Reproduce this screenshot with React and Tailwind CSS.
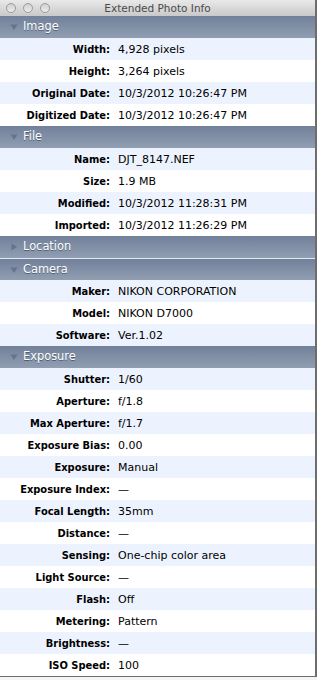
const sections = [
  {
    title: 'Image',
    open: true,
    rows: [
      ['Width:', '4,928 pixels'],
      ['Height:', '3,264 pixels'],
      ['Original Date:', '10/3/2012 10:26:47 PM'],
      ['Digitized Date:', '10/3/2012 10:26:47 PM'],
    ],
  },
  {
    title: 'File',
    open: true,
    rows: [
      ['Name:', 'DJT_8147.NEF'],
      ['Size:', '1.9 MB'],
      ['Modified:', '10/3/2012 11:28:31 PM'],
      ['Imported:', '10/3/2012 11:26:29 PM'],
    ],
  },
  { title: 'Location', open: false, rows: [] },
  {
    title: 'Camera',
    open: true,
    rows: [
      ['Maker:', 'NIKON CORPORATION'],
      ['Model:', 'NIKON D7000'],
      ['Software:', 'Ver.1.02'],
    ],
  },
  {
    title: 'Exposure',
    open: true,
    rows: [
      ['Shutter:', '1/60'],
      ['Aperture:', 'f/1.8'],
      ['Max Aperture:', 'f/1.7'],
      ['Exposure Bias:', '0.00'],
      ['Exposure:', 'Manual'],
      ['Exposure Index:', '\u2014'],
      ['Focal Length:', '35mm'],
      ['Distance:', '\u2014'],
      ['Sensing:', 'One-chip color area'],
      ['Light Source:', '\u2014'],
      ['Flash:', 'Off'],
      ['Metering:', 'Pattern'],
      ['Brightness:', '\u2014'],
      ['ISO Speed:', '100'],
    ],
  },
]

const TrafficLight = () => (
  <span className="block w-[10px] h-[10px] rounded-full border border-[#9c9c9c] bg-gradient-to-b from-[#cfcfcf] to-[#ededed]" />
)

const Disclosure = ({ open }) => (
  <svg width="8" height="8" viewBox="0 0 8 8" className="shrink-0">
    {open ? (
      <path d="M0.5 1.5 L7.5 1.5 L4 7 Z" fill="#66738a" />
    ) : (
      <path d="M1.5 0.5 L7 4 L1.5 7.5 Z" fill="#66738a" />
    )}
  </svg>
)

const Header = ({ title, open, line }) => (
  <div
    className={`h-[22px] flex items-center pl-[10px] gap-[5px] bg-gradient-to-b from-[#71819a] to-[#919eb2] ${line ? 'border-t border-[#e4e9f1]' : ''}`}
  >
    <Disclosure open={open} />
    <span
      className="text-white text-[11.4px] leading-none"
      style={{ textShadow: '0 1px 0 rgba(40,50,70,0.55)' }}
    >
      {title}
    </span>
  </div>
)

const Row = ({ label, value, shaded }) => (
  <div className={`h-[22px] flex items-center ${shaded ? 'bg-[#edf3fe]' : 'bg-white'}`}>
    <span className="w-[110px] text-right font-bold text-[11px] text-black leading-none" style={{ fontFamily: '"DejaVu Sans Condensed", "DejaVu Sans", sans-serif', fontStretch: 'condensed' }}>
      {label}
    </span>
    <span className="pl-[8px] text-[11px] text-black leading-none">{value}</span>
  </div>
)

export default function App() {
  return (
    <div
      className="w-[317px] h-[680px] bg-[#f4f4f4] overflow-hidden"
      style={{ fontFamily: '"DejaVu Sans", Verdana, sans-serif' }}
    >
      <div className="w-[317px] border-r-2 border-b border-[#6d6d6d]">
        <div className="h-[16px] relative flex items-center bg-gradient-to-b from-[#e9e9e9] to-[#c9c9c9]">
          <div className="flex gap-[7px] pl-[6px]">
            <TrafficLight />
            <TrafficLight />
            <TrafficLight />
          </div>
          <span className="absolute left-0 right-0 text-center text-[10.5px] text-[#4a4a4a] leading-none">
            Extended Photo Info
          </span>
        </div>
        {sections.map((s, i) => (
          <div key={s.title}>
            <Header title={s.title} open={s.open} line={i > 0 && !sections[i - 1].open} />
            {s.rows.map(([label, value], j) => (
              <Row key={label} label={label} value={value} shaded={j % 2 === 0} />
            ))}
          </div>
        ))}
      </div>
    </div>
  )
}
